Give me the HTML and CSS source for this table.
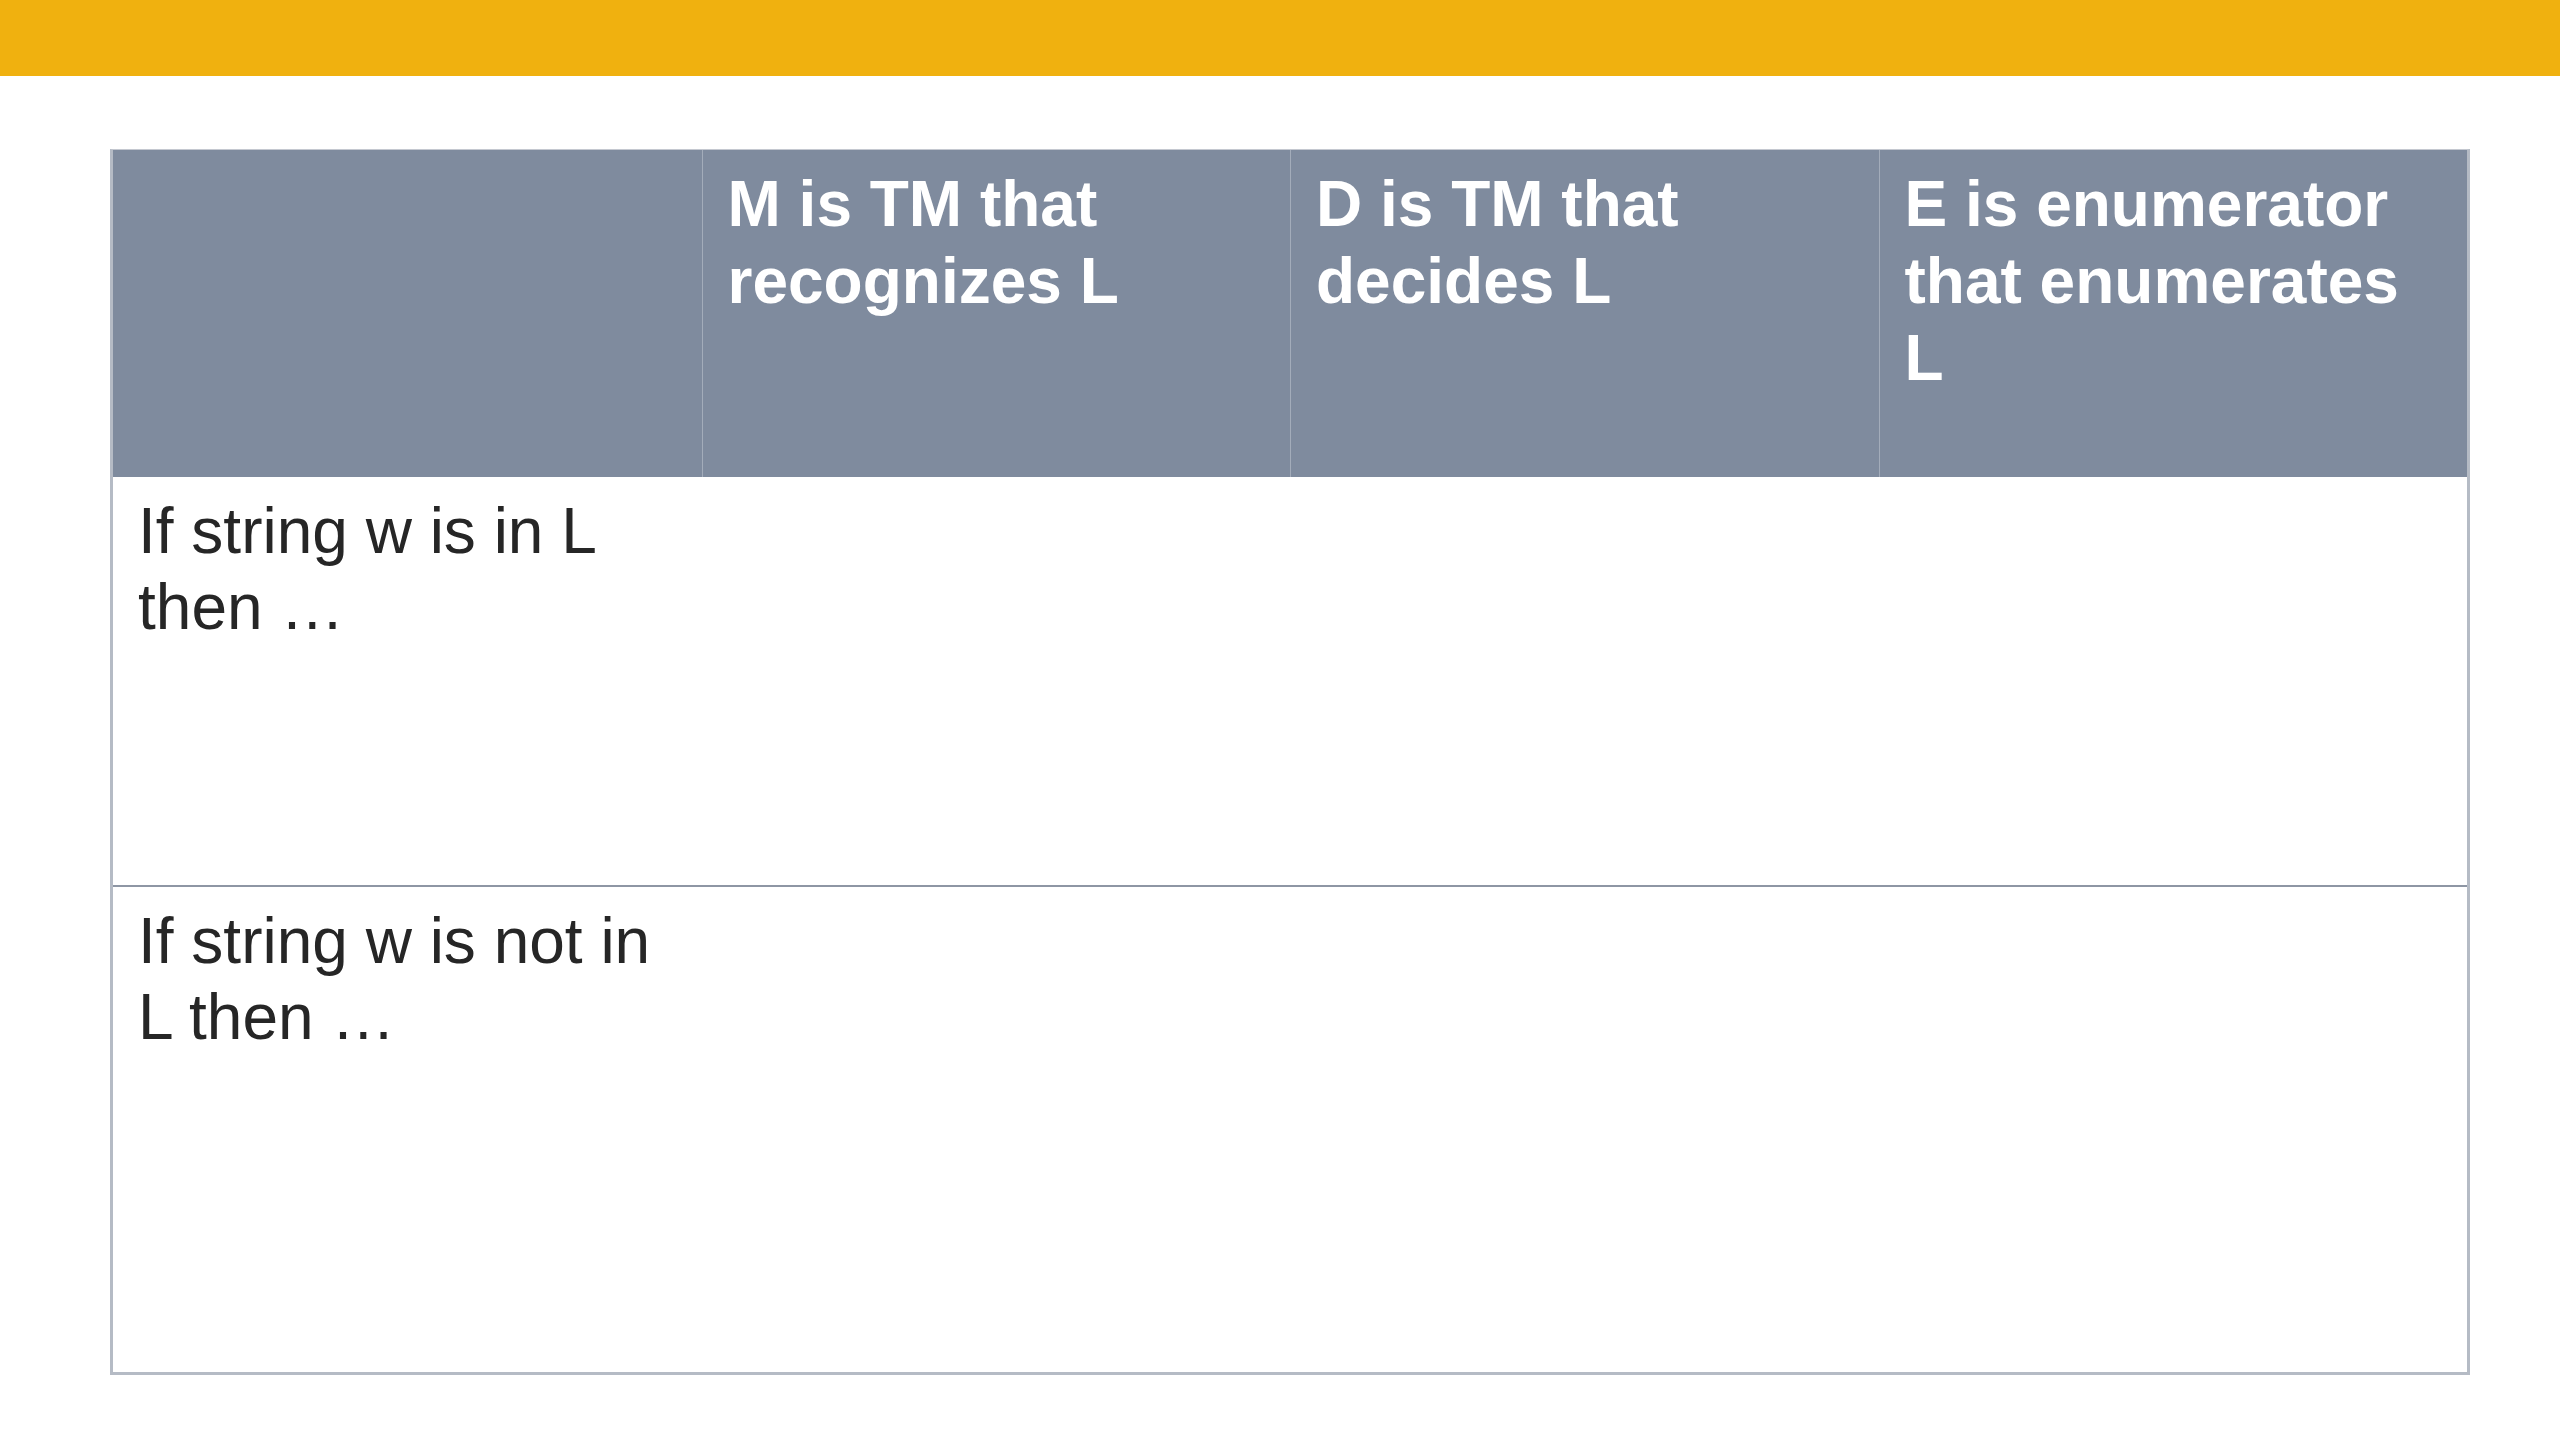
FILE: index.html
```html
<!DOCTYPE html>
<html>
<head>
<meta charset="utf-8">
<link rel="stylesheet" href="styles.css">
</head>
<body>
<div class="topbar"></div>
<div class="stage">
  <div class="grid">
    <div class="hcell"></div>
    <div class="hcell div">M is TM that recognizes L</div>
    <div class="hcell div">D is TM that decides L</div>
    <div class="hcell div">E is enumerator that enumerates L</div>

    <div class="bcell r1">If string w is in L then …</div>
    <div class="bcell r1"></div>
    <div class="bcell r1"></div>
    <div class="bcell r1"></div>

    <div class="bcell r2">If string w is not in L then …</div>
    <div class="bcell r2"></div>
    <div class="bcell r2"></div>
    <div class="bcell r2"></div>
  </div>
</div>
</body>
</html>
```
FILE: styles.css
```css
html, body {
  margin: 0;
  padding: 0;
  background: #ffffff;
}
body {
  font-family: "Liberation Sans", Arial, sans-serif;
  width: 2560px;
  height: 1440px;
  overflow: hidden;
}
.topbar {
  height: 76px;
  background: #f0b10f;
}
.stage {
  padding: 73px 0 0 110px;
}
.grid {
  width: 2360px;
  box-sizing: border-box;
  display: grid;
  grid-template-columns: repeat(4, 1fr);
  grid-template-rows: 327px 410px 485px;
  border: 3px solid #b5bbc5;
  border-top: 1px solid #c4c8d0;
}
.hcell {
  background: #7f8b9e;
  color: #ffffff;
  font-weight: bold;
  font-size: 64px;
  line-height: 77px;
  padding: 16px 24px 0 25px;
}
.hcell.div {
  border-left: 1px solid #a3acba;
}
.bcell {
  color: #262626;
  font-size: 64px;
  line-height: 76px;
  padding: 16px 24px 0 25px;
}
.r1 {
  border-bottom: 2px solid #8e96a4;
}
```
